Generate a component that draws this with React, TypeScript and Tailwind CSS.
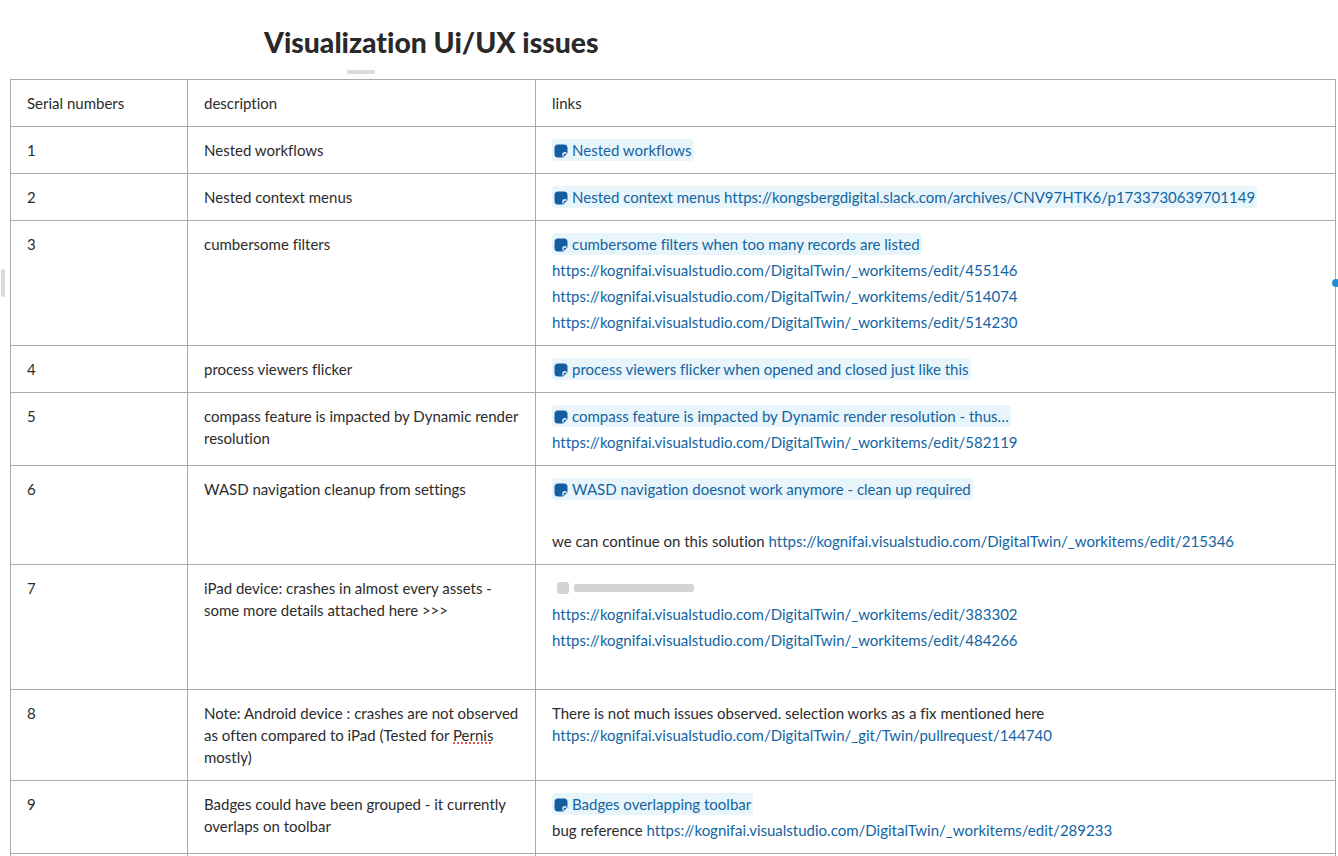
const href = 'https://kognifai.visualstudio.com/DigitalTwin/_workitems/edit/';

function NoteIcon() {
  return (
    <svg className="mr-1 inline-block size-[14px] align-[-2px]" viewBox="0 0 14 14" aria-hidden="true">
      <path
        d="M4 .5h6A3.5 3.5 0 0 1 13.5 4v5.2l-4.3 4.3H4A3.5 3.5 0 0 1 .5 10V4A3.5 3.5 0 0 1 4 .5Z"
        fill="#145da0"
      />
      <path d="M9 12.5V10.2a1.2 1.2 0 0 1 1.2-1.2h2.3" fill="none" stroke="#fff" strokeWidth="1.3" />
    </svg>
  );
}

function Canvas({ children }: { children: React.ReactNode }) {
  return (
    <span className="rounded-[4px] bg-[#e8f5fa] py-[2px] pr-[2px] pl-[2px] text-[#1264a3]">
      <NoteIcon />
      {children}
    </span>
  );
}

function LinkLine({ children }: { children: React.ReactNode }) {
  return <div className="h-[26px] leading-[26px] text-[#1264a3]">{children}</div>;
}

function Row({ n, desc, children }: { n: number; desc: React.ReactNode; children: React.ReactNode }) {
  return (
    <tr>
      <td className="border border-[#ababad] px-4 py-3 align-top">{n}</td>
      <td className="border border-[#ababad] px-4 py-3 align-top">{desc}</td>
      <td className="border border-[#ababad] px-4 py-[10px] align-top">{children}</td>
    </tr>
  );
}

export default function App() {
  return (
    <div className="relative h-[856px] overflow-hidden bg-white font-['Lato','Liberation_Sans',sans-serif] text-[15px] leading-[22px] text-[#2c2b2c] [font-variant-ligatures:none]">
      <div className="pt-[25px] pl-[264px]">
        <h1 className="text-[28.35px] leading-[34px] font-black text-[#2a292a]">Visualization Ui/UX issues</h1>
      </div>
      <div className="mt-[11px] ml-[347px] h-1 w-7 rounded-full bg-[#d8dadc]" />
      <div className="mt-[5px] pl-[10px]">
        <table className="w-[1326px] table-fixed border-collapse">
          <colgroup>
            <col className="w-[177px]" />
            <col className="w-[348px]" />
            <col />
          </colgroup>
          <tbody>
            <tr>
              <td className="border border-[#ababad] px-4 py-3">Serial numbers</td>
              <td className="border border-[#ababad] px-4 py-3">description</td>
              <td className="border border-[#ababad] px-4 py-3">links</td>
            </tr>
            <Row n={1} desc="Nested workflows">
              <LinkLine><Canvas>Nested workflows</Canvas></LinkLine>
            </Row>
            <Row n={2} desc="Nested context menus">
              <LinkLine><Canvas>Nested context menus https://kongsbergdigital.slack.com/archives/CNV97HTK6/p1733730639701149</Canvas></LinkLine>
            </Row>
            <Row n={3} desc="cumbersome filters">
              <LinkLine><Canvas>cumbersome filters when too many records are listed</Canvas></LinkLine>
              <LinkLine>{href}455146</LinkLine>
              <LinkLine>{href}514074</LinkLine>
              <LinkLine>{href}514230</LinkLine>
            </Row>
            <Row n={4} desc="process viewers flicker">
              <LinkLine><Canvas>process viewers flicker when opened and closed just like this</Canvas></LinkLine>
            </Row>
            <Row n={5} desc="compass feature is impacted by Dynamic render resolution">
              <LinkLine><Canvas>compass feature is impacted by Dynamic render resolution - thus…</Canvas></LinkLine>
              <LinkLine>{href}582119</LinkLine>
            </Row>
            <Row n={6} desc="WASD navigation cleanup from settings">
              <LinkLine><Canvas>WASD navigation doesnot work anymore - clean up required</Canvas></LinkLine>
              <div className="h-[26px]" />
              <div className="h-[26px] leading-[26px]">
                we can continue on this solution <span className="text-[#1264a3]">{href}215346</span>
              </div>
            </Row>
            <Row n={7} desc="iPad device: crashes in almost every assets - some more details attached here >>>">
              <div className="flex h-[26px] items-center pl-[5px]">
                <span className="size-3 rounded-[3px] bg-[#d4d4d4]" />
                <span className="ml-[5px] h-[8px] w-[120px] rounded-[2px] bg-[#d4d4d4]" />
              </div>
              <LinkLine>{href}383302</LinkLine>
              <LinkLine>{href}484266</LinkLine>
              <div className="h-[26px]" />
            </Row>
            <tr>
              <td className="border border-[#ababad] px-4 py-3 align-top">8</td>
              <td className="border border-[#ababad] px-4 py-3 align-top">
                Note: Android device : crashes are not observed as often compared to iPad (Tested for{' '}
                <span className="underline decoration-[#e01e1e] decoration-dotted underline-offset-2">Pernis</span> mostly)
              </td>
              <td className="border border-[#ababad] px-4 py-3 align-top">
                There is not much issues observed. selection works as a fix mentioned here
                <div className="text-[#1264a3]">https://kognifai.visualstudio.com/DigitalTwin/_git/Twin/pullrequest/144740</div>
              </td>
            </tr>
            <Row n={9} desc="Badges could have been grouped - it currently overlaps on toolbar">
              <LinkLine><Canvas>Badges overlapping toolbar</Canvas></LinkLine>
              <div className="h-[26px] leading-[26px]">
                bug reference <span className="text-[#1264a3]">{href}289233</span>
              </div>
            </Row>
            <tr>
              <td className="border border-[#ababad] px-4 py-3">&nbsp;</td>
              <td className="border border-[#ababad] px-4 py-3">&nbsp;</td>
              <td className="border border-[#ababad] px-4 py-3">&nbsp;</td>
            </tr>
          </tbody>
        </table>
      </div>
      {/* resize handle on the left edge */}
      <div className="absolute top-[269px] left-[1px] h-7 w-1 rounded-full bg-[#d8dadc]" />
      {/* blue column handle on the right edge */}
      <div className="absolute top-[279px] left-[1332px] size-2 rounded-full bg-[#1d8fd1]" />
    </div>
  );
}
